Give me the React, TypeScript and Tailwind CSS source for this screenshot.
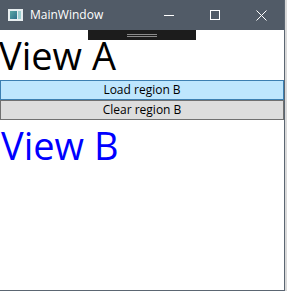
export default function App() {
  return (
    <div className="w-[287px] h-[291px] bg-[#d9d9d9] flex" style={{ fontFamily: '"Open Sans", "Noto Sans", sans-serif' }}>
      <div className="w-[285px] h-[291px] flex flex-col bg-white border-r border-b border-[#5b6672]">
        <div className="h-[30px] shrink-0 bg-[#515b67] flex items-center text-white">
          <div className="ml-[8px] w-[15px] h-[12px] bg-[#e8eef0] flex items-center p-[2px] gap-[1px]">
            <div className="w-[7px] h-[8px] bg-gradient-to-br from-[#5ba7a4] to-[#2e6f8a]" />
            <div className="w-[3px] h-[8px] bg-[#9ccfd0]" />
          </div>
          <span className="ml-[7px] text-[12px] leading-none">MainWindow</span>
          <div className="ml-auto flex items-center">
            <div className="w-[46px] h-[30px] flex items-center justify-center">
              <div className="w-[10px] h-px bg-white" />
            </div>
            <div className="w-[46px] h-[30px] flex items-center justify-center">
              <div className="w-[10px] h-[10px] border border-white" />
            </div>
            <div className="w-[46px] h-[30px] flex items-center justify-center">
              <svg width="11" height="11" viewBox="0 0 11 11" stroke="white" strokeWidth="1">
                <path d="M0.5 0.5 L10.5 10.5 M10.5 0.5 L0.5 10.5" />
              </svg>
            </div>
          </div>
        </div>
        <div className="relative">
          <div className="absolute left-[88px] top-0 w-[108px] h-[10px] bg-[#1c1c1c] flex flex-col items-center justify-center gap-[1px]">
            <div className="w-[30px] h-px bg-[#8a8a8a]" />
            <div className="w-[30px] h-px bg-[#8a8a8a]" />
          </div>
        </div>
        <div className="h-[50px] text-[38px] leading-[50px] text-black ml-[-1px]">View A</div>
        <button className="h-[20px] w-full bg-[#bee6fd] border border-[#3c7fb1] text-[12px] leading-none text-black">Load region B</button>
        <button className="h-[20px] w-full bg-[#dddddd] border border-[#707070] text-[12px] leading-none text-black">Clear region B</button>
        <div className="text-[38px] leading-[50px] text-[#0000ff] ml-[1px]">View B</div>
      </div>
    </div>
  )
}
